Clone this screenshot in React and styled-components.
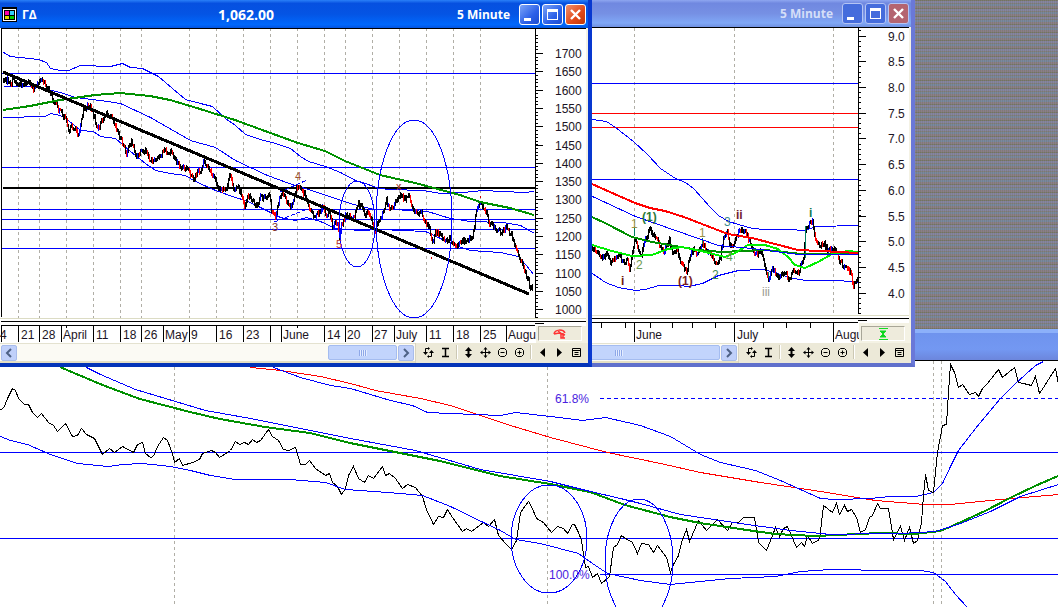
import React from 'react'
import styled, { createGlobalStyle } from "styled-components";

/* price paths as x,y pairs */
const MAIN_PRICE = "0,409 3,408 7,398 12,388 15,390 18,398 24,404 28,404 32,412 37,417 41,413 48,422 53,425 57,431 65,423 72,436 77,435 81,428 86,434 94,438 102,454 109,448 114,452 122,446 133,452 137,444 142,442 145,453 150,457 153,456 157,446 163,437 167,440 172,453 174,462 179,458 182,465 192,462 199,459 202,453 211,450 215,452 219,457 230,450 235,441 239,444 244,442 248,444 252,439 256,442 260,440 268,429 272,436 278,440 283,449 288,450 295,447 300,464 305,464 309,460 315,468 325,475 329,473 332,482 337,486 341,494 345,488 348,475 353,466 358,478 364,482 368,475 373,478 382,466 385,475 389,473 395,478 402,488 407,484 415,487 422,496 426,509 433,524 438,516 443,517 447,509 452,517 462,531 466,528 471,531 483,522 488,526 494,519 498,535 505,543 511,549 516,540 520,512 528,501 531,506 536,518 543,522 551,532 557,526 563,528 567,533 572,524 574,524 578,532 581,540 585,567 588,566 592,577 597,573 601,583 609,576 613,547 617,544 621,535 625,538 632,542 637,553 641,543 648,544 653,552 657,545 666,557 670,572 673,564 678,555 681,542 686,529 689,541 698,520 702,525 706,530 717,519 727,530 732,522 738,522 743,517 754,517 758,542 766,550 772,535 775,527 779,536 783,528 787,526 796,547 801,542 804,546 807,535 812,543 819,539 823,505 832,512 836,503 839,514 844,505 847,511 851,509 856,517 860,532 865,529 869,517 872,515 877,503 880,508 888,508 893,539 900,526 904,540 909,527 913,543 917,540 921,522 923,495 925,474 928,490 933,492 937,452 942,425 946,424 948,392 950,364 954,372 958,387 962,384 969,394 975,392 978,396 982,388 987,383 998,369 1002,377 1014,367 1018,382 1023,383 1031,385 1035,376 1039,393 1043,387 1055,368 1058,384";

const FRONT_PRICE = "3,80 8,81 10,86 13,78 17,85 22,84 28,83 33,88 36,87 40,79 45,85 49,90 52,99 57,108 62,115 66,118 68,130 72,127 75,130 78,134 80,124 83,110 87,106 91,108 94,118 97,130 101,122 105,114 111,114 117,131 119,136 122,144 126,153 131,141 134,150 136,158 140,153 146,151 148,158 152,163 156,160 162,153 164,149 167,155 171,152 175,160 180,166 186,168 190,175 193,181 195,174 200,172 203,160 206,166 211,174 215,179 218,189 226,191 229,174 233,188 238,189 242,197 244,206 248,195 252,200 257,207 260,197 265,199 269,193 271,210 275,219 278,203 282,192 287,204 291,208 293,199 296,188 300,187 302,190 306,198 310,210 314,216 319,214 322,206 326,216 329,210 332,228 334,221 337,223 339,239 341,226 346,213 350,219 354,217 358,204 361,207 365,216 368,211 372,222 375,230 378,221 382,214 386,200 389,208 393,205 397,198 400,193 404,200 408,196 412,207 416,214 421,212 425,222 429,227 432,243 435,232 440,235 444,242 449,239 455,246 460,242 468,240 472,236 474,225 476,210 480,202 484,209 489,222 494,228 500,232 506,228 511,235 515,246 519,260 524,270 528,280 530,291 533,285";

const BACK_PRICE = "592,248 597,252 602,258 606,254 610,262 615,257 618,253 623,263 627,260 629,271 631,260 633,247 635,237 638,248 641,255 643,245 647,235 649,227 652,233 656,238 660,248 663,252 669,240 672,253 677,248 679,260 682,265 686,273 689,258 693,250 697,255 702,243 706,250 711,255 715,265 720,257 723,237 727,232 730,248 733,243 736,235 740,230 745,232 750,243 755,255 760,252 763,260 768,280 772,268 777,277 782,275 786,275 789,280 793,270 798,272 803,258 805,230 808,225 812,223 815,240 819,247 823,243 828,250 835,250 840,262 845,268 850,272 853,287 855,281 858,277";

const FRONT_GRID = [18, 39, 66, 93, 120, 141, 189, 216, 243, 270, 297, 324, 345, 372, 399, 426, 453, 480];
const FRONT_DATES = [
  [1, 0, "4"], [18, 21, "21"], [39, 42, "28"], [61, 63, "April"], [93, 96, "11"], [120, 123, "18"],
  [141, 144, "26"], [163, 165, "May"], [189, 191, "9"], [216, 219, "16"], [243, 246, "23"], [270, 273, ""],
  [281, 283, "June"], [324, 327, "14"], [345, 347, "20"], [372, 374, "27"], [394, 396, "July"],
  [426, 429, "11"], [453, 456, "18"], [480, 483, "25"], [506, 508, "Augu"],
];
const BACK_DATES = [[634, 636, "June"], [734, 737, "July"], [833, 835, "Augu"]];
const BACK_TICKS = [601, 625, 650, 672, 692, 715, 763, 786, 810];

const FRONT_SCALE = Array.from({ length: 15 }, (_, i) => ({ y: 53 + i * 18.3, label: String(1700 - i * 50) }));
const BACK_SCALE = Array.from({ length: 11 }, (_, i) => ({ y: 35.6 + i * 25.7, label: (9 - i * 0.5).toFixed(1) }));

/* turns a price path into short vertical bars, one per pixel column, split by colour */
function makeBars(text, seed) {
  const pts = text.split(" ").map((p) => p.split(",").map(Number));
  const out = { black: "", red: "", blue: "" };
  let s = seed;
  const rand = () => {
    s = (s * 1103515245 + 12345) % 2147483648;
    return s / 2147483648;
  };
  let last = pts[0][1];
  for (let i = 0; i < pts.length - 1; i++) {
    const [x1, y1] = pts[i];
    const [x2, y2] = pts[i + 1];
    for (let x = x1; x < x2; x++) {
      const y = y1 + ((y2 - y1) * (x - x1)) / (x2 - x1) + (rand() - 0.5) * 5;
      const r = rand();
      const top = Math.round(Math.min(last, y) - 1 - rand() * 1.5);
      const bottom = Math.round(Math.max(last, y) + 1 + rand() * 1.5);
      const key = r < 0.6 ? "black" : y > last ? "red" : r < 0.85 ? "blue" : "black";
      out[key] += `M${x} ${top}V${bottom}`;
      last = y;
    }
  }
  return out;
}

const FRONT_BARS = makeBars(FRONT_PRICE, 7);
const BACK_BARS = makeBars(BACK_PRICE, 19);

function PriceBars({ bars }) {
  return (
    <g transform="translate(0.5 0)">
      <Line d={bars.red} color="#f00" />
      <Line d={bars.blue} color="#00f" />
      <Line d={bars.black} color="#000" />
    </g>
  )
}

/* odd widths sit on half pixels so that flat runs keep one even thickness */
function Curve({ points, color = "#00f", width = 1 }) {
  return <Poly points={points} $color={color} $width={width} transform={width % 2 ? "translate(0.5 0.5)" : undefined} />
}

function Line({ d, color, width = 1, dash }) {
  return <path d={d} fill="none" stroke={color} strokeWidth={width} strokeDasharray={dash} shapeRendering="crispEdges" />
}

function Grid({ xs, top, bottom }) {
  return <Line d={xs.map((x) => `M${x + 0.5} ${top}V${bottom}`).join("")} color="#b0aea6" dash="3 3" />
}

function Levels({ ys, from, to, color = "#00f" }) {
  return <Line d={ys.map((y) => `M${from} ${y + 0.5}H${to}`).join("")} color={color} />
}

function Scale({ x, marks, top, bottom, labelX }) {
  const step = marks[1].y - marks[0].y;
  const ticks = [];
  for (let y = marks[0].y - step; y < bottom; y += step / 5) {
    if (y > top) ticks.push(`M${x} ${Math.round(y) + 0.5}h3`);
  }
  return (
    <g>
      <Line d={`M${x + 0.5} ${top}V${bottom}${ticks.join("")}`} color="#000" />
      <Line d={marks.map((m) => `M${x} ${Math.round(m.y) + 0.5}h8`).join("")} color="#000" />
      {marks.map((m) => <Label key={m.label} x={labelX} y={Math.round(m.y) + 5}>{m.label}</Label>)}
    </g>
  )
}

function Dates({ items, top }) {
  return (
    <g>
      <Line d={items.map((d) => `M${d[0] + 0.5} ${top}V342`).join("")} color="#000" />
      {items.map((d) => <Label key={d[0]} x={d[1]} y={339}>{d[2]}</Label>)}
    </g>
  )
}

function FrontPlot() {
  return (
    <svg width="586" height="298" viewBox="0 28 586 298" role="img" aria-label="Index price chart">
      <rect x="0" y="28" width="586" height="298" fill="#fff" />
      <Grid xs={FRONT_GRID} top={28} bottom={318} />
      <Levels ys={[73, 167, 209, 219, 229, 248]} from={2} to={535} />
      <Line d="M3 188H535" color="#000" width={2} />
      <Curve points="3,52 10,56 38,59 46,62 50,68 60,70 68,70 80,65 110,66 122,63 130,67 142,68 158,76 172,88 185,99 200,103 212,106 225,118 235,125 245,134 260,139 275,143 290,148 300,156 308,161 325,166 340,172 355,180 365,183 378,188 390,189 423,190 440,193 463,192 482,190 503,191 523,192 534,191" />
      <Curve points="3,86 35,86 60,92 75,97 100,100 120,103 150,117 190,140 215,147 235,160 267,175 297,186 305,188 323,194 350,203 373,209 393,209 427,211 450,218 470,221 503,222 520,225 534,233" />
      <Curve points="3,117 45,116 50,113 60,115 68,120 80,130 93,131 100,136 115,138 130,151 145,163 155,170 170,173 185,175 195,181 215,190 235,197 245,200 258,206 268,211 280,217 295,220 306,217 320,221 335,228 360,230 380,229 425,231 440,238 455,245 470,250 500,252 518,256 526,265 533,274" />
      <Line d="M274 222L290 216L307 209M280 192L307 180" color="#00f" dash="4 2" />
      <PriceBars bars={FRONT_BARS} />
      <Curve points="3,110 30,106 60,100 95,95 120,93 150,96 170,100 200,109 235,120 265,131 298,143 325,151 345,161 380,175 415,183 430,187 460,195 480,202 510,208 534,215" color="#009000" width={2} />
      <Line d="M3 72L529 294" color="#000" width={3} />
      <Ring cx="357" cy="224" rx="18" ry="43" />
      <Ring cx="414" cy="219" rx="38" ry="99" />
      <Line d="M480 196v2M431 257v2" color="#c00" />
      <Label x="295" y="180" $color="#a0522d" $small>4</Label>
      <Label x="272" y="231" $color="#80301e" $small>3</Label>
      <Label x="336" y="248" $color="#b0342c" $small>5</Label>
      <Label x="396" y="190" $color="#b04030" $small>x</Label>
      <Scale x={535} marks={FRONT_SCALE} top={28} bottom={317} labelX={555} />
      <Line d="M1.5 28V317" color="#000" />
      <Line d="M1 28.5H586M1 321.5H586M1 325.5H535" color="#000" />
      <Line d="M0 318.5H586" color="#dcdcc4" />
      <Line d="M535 323.5H544" color="#000" />
    </svg>
  )
}

function BackPlot() {
  return (
    <svg width="586" height="296" viewBox="323 27 586 296" role="img" aria-label="Share price chart">
      <rect x="323" y="27" width="586" height="296" fill="#fff" />
      <Grid xs={[634, 734, 833]} top={28} bottom={315} />
      <Levels ys={[83, 179]} from={592} to={858} />
      <Levels ys={[113, 127]} from={592} to={858} color="#f00" />
      <Curve points="592,119 606,121 615,127 633,141 647,154 660,168 675,178 685,182 693,188 702,198 710,207 718,215 728,221 738,224 752,228 765,229 788,229 805,230 815,226 858,225" />
      <Curve points="592,273 605,282 618,287 635,290 645,289 658,285 678,285 688,286 702,283 718,275 738,270 762,269 775,272 788,277 805,280 838,280 858,282" />
      <PriceBars bars={BACK_BARS} />
      <Line d="M634.5 228v8M702.5 238v6M805.5 226v32M768.5 272v6" color="#008060" />
      <Curve points="592,217 605,223 632,237 652,242 675,246 698,250 722,252 742,251 765,250 802,254 858,253" color="#009000" width={2} />
      <Curve points="592,245 612,251 632,256 652,255 668,249 682,247 705,252 725,257 735,253 748,245 765,245 778,249 788,257 795,265 805,268 818,262 832,254 848,251 858,252" color="#00f000" width={2} />
      <Curve points="592,184 610,192 635,203 650,208 665,211 684,217 702,224 728,234 752,238 775,244 798,250 820,251 858,253" color="#f00" width={2} />
      <Curve points="592,196 605,202 635,216 675,230 718,245 752,248 798,254 832,254 858,254" />
      <Label x="621" y="285" $color="#702010" $bold>i</Label>
      <Label x="631" y="228" $color="#9a9040">1</Label>
      <Label x="642" y="221" $color="#2b7a3a" $bold>(1)</Label>
      <Label x="636" y="269" $color="#6b9a50">2</Label>
      <Label x="678" y="285" $color="#7a1c1c" $bold>(1)</Label>
      <Label x="699" y="237" $color="#9a9040">1</Label>
      <Label x="712" y="279" $color="#3f8a50">2</Label>
      <Label x="724" y="226" $color="#3a8a8a">3</Label>
      <Label x="726" y="261" $color="#5a9a50">4</Label>
      <Label x="736" y="219" $color="#702030" $bold>ii</Label>
      <Label x="809" y="217" $color="#107a50" $bold>i</Label>
      <Label x="762" y="296" $color="#9a9a90">iii</Label>
      <Scale x={858} marks={BACK_SCALE} top={28} bottom={314} labelX={888} />
      <Line d="M592 27.5H909M592 318.5H909M592 322.5H858" color="#000" />
      <Line d="M592 315.5H909" color="#dcdcc4" />
      <Line d="M858 320.5H867" color="#000" />
    </svg>
  )
}

function MainPlot() {
  return (
    <WideChart viewBox="0 361 1058 246" role="img" aria-label="Intraday price chart">
      <Grid xs={[174, 547, 933, 941]} top={361} bottom={607} />
      <Levels ys={[452, 538]} from={0} to={1058} />
      <Levels ys={[574]} from={600} to={1058} />
      <Line d="M600 398.5H1058" color="#00f" dash="4 3" />
      <Curve points="250,367 280,370 320,376 350,383 375,390 420,398 450,405 510,425 550,437 607,452 660,463 700,472 760,482 820,491 875,500 925,504 950,504 1000,499 1058,494" color="#f00" />
      <Curve points="273,367 300,377 330,385 350,388 390,400 412,405 427,412 450,413 500,415 515,412 550,416 582,420 605,417 640,425 670,436 700,454 720,462 755,470 780,480 820,498 835,499 870,498 890,496 915,496 933,492 942,483 950,466 958,450 975,428 1000,398 1015,383 1035,365 1043,361" />
      <Curve points={MAIN_PRICE} color="#000" />
      <Curve points="60,367 100,384 140,399 190,412 220,419 265,427 310,433 350,443 395,452 440,461 500,476 550,484 590,492 625,505 670,517 700,523 740,529 775,534 815,536 880,533 915,534 940,531 950,527 985,511 1010,498 1035,486 1058,476" color="#009000" width={2} />
      <Curve points="86,367 100,374 135,389 175,401 205,410 250,418 300,428 350,438 415,450 480,469 550,481 590,491 620,498 640,503 680,514 700,517 740,523 790,530 830,534 880,533 900,533 935,531 960,523 990,511 1020,496 1058,484" />
      <Curve points="0,436 10,440 27,444 50,454 77,463 108,466 122,464 142,463 170,466 190,470 210,475 235,479 290,479 325,482 345,489 360,490 400,493 422,495 450,506 483,522 500,530 515,539 540,543 578,553 592,563 607,573 640,580 670,584 700,581 730,578 775,576 800,571 830,569 890,570 920,570 933,572 945,581 955,594 967,607" />
      <Ring cx="549" cy="539" rx="38" ry="54" />
      <Ring cx="639" cy="561" rx="34" ry="62" />
      <Label x="555" y="403" $color="#4a1ee0">61.8%</Label>
      <Label x="549" y="579" $color="#4a1ee0">100.0%</Label>
    </WideChart>
  )
}

/* glyphs of the tool strip, drawn in a 13px box */
const TOOLS = [
  ["Refresh", <g key="i"><path d="M6 2.500H3.500V7M7 10.500h2.500V6" fill="none" stroke="#000" /><path d="M1 6h5L3.500 9zM7 7h5L9.500 4z" /><path d="M6 1l2 1.500L6 4zM7 9l-2 1.500L7 12z" /></g>],
  ["Text cursor", <path key="i" d="M3 2.500h7M6.500 2.500v8M3 10.500h7" fill="none" stroke="#000" strokeWidth="1.500" />],
  null,
  ["Stretch", <path key="i" d="M6.500 1L10 5H7.500v3H10l-3.500 4L3 8h2.500V5H3z" />],
  ["Move", <g key="i"><path d="M6.500 2v9M2 6.500h9" fill="none" stroke="#000" /><path d="M6.500 1l2 2.500h-4zM6.500 12l2-2.500h-4zM1 6.500l2.500-2v4zM12 6.500l-2.500-2v4z" /></g>],
  ["Zoom out", <path key="i" d="M4.500 2.500h4l2 2v4l-2 2h-4l-2-2v-4zM4.500 6.500h4" fill="none" stroke="#000" />],
  ["Zoom in", <path key="i" d="M4.500 2.500h4l2 2v4l-2 2h-4l-2-2v-4zM4.500 6.500h4M6.500 4.500v4" fill="none" stroke="#000" />],
  null,
  ["Previous", <path key="i" d="M9 2v9L4 6.500z" />],
  ["Next", <path key="i" d="M4 2v9l5-4.500z" />],
  ["Properties", <path key="i" d="M2.500 2.500h8v8h-8zM2.500 4.500h8M4.500 6.500h4M4.500 8.500h4" fill="none" stroke="#000" />],
];

function ScrollArrow({ label, d }) {
  return (
    <ArrowButton type="button" aria-label={label}>
      <svg width="8" height="10" viewBox="0 0 8 10"><path d={d} fill="none" stroke="#4d6185" strokeWidth="2" /></svg>
    </ArrowButton>
  )
}

function ToolStrip({ thumb }) {
  return (
    <Strip>
      <ScrollTrack>
        <ScrollArrow label="Scroll left" d="M6 1L2 5l4 4" />
        <Thumb $width={thumb}><Grip /></Thumb>
        <ScrollArrow label="Scroll right" d="M2 1l4 4-4 4" />
      </ScrollTrack>
      <Tools>
        {TOOLS.map((t, i) => t
          ? <Tool key={i} type="button" aria-label={t[0]}><svg width="13" height="13" viewBox="0 0 13 13">{t[1]}</svg></Tool>
          : <Divider key={i} />)}
      </Tools>
    </Strip>
  )
}

function WindowButtons({ faded }) {
  return (
    <Buttons>
      <CaptionButton type="button" aria-label="Minimize" $faded={faded}>
        <svg width="19" height="19" viewBox="0 0 19 19"><path d="M4 13h7v3H4z" fill="#fff" /></svg>
      </CaptionButton>
      <CaptionButton type="button" aria-label="Maximize" $faded={faded}>
        <svg width="19" height="19" viewBox="0 0 19 19"><path d="M4 4h11v11H4zM5 7v7h9V7z" fill="#fff" fillRule="evenodd" /></svg>
      </CaptionButton>
      <CaptionButton type="button" aria-label="Close" $close $faded={faded}>
        <svg width="19" height="19" viewBox="0 0 19 19"><path d="M5 5l9 9M14 5l-9 9" stroke="#fff" strokeWidth="2.400" /></svg>
      </CaptionButton>
    </Buttons>
  )
}

function AppIcon() {
  return (
    <svg width="15" height="15" viewBox="0 0 15 15" shapeRendering="crispEdges">
      <path d="M0 0h15v15H0z" fill="#000" />
      <path d="M1 2h13v12H1z" fill="#fff" />
      <path d="M2 3h11v10H2z" fill="#000" />
      <path d="M3 4h4v4H3z" fill="#f0a" /><path d="M8 4h4v4H8z" fill="#3cf" />
      <path d="M3 9h4v3H3z" fill="#dd0" /><path d="M8 9h4v3H8z" fill="#0c0" />
    </svg>
  )
}

function App() {
  return (
    <Desktop>
      <GlobalStyle />
      <Backdrop />
      <MainPlot />
      <Window $left={323} $faded>
        <TitleBar $faded>
          <Period>5 Minute</Period>
          <WindowButtons faded />
        </TitleBar>
        <Body>
          <BackPlot />
          <TimeRow>
            <svg width="536" height="20" viewBox="323 323 536 20">
              <Dates items={BACK_DATES} top={323} />
              <Line d={BACK_TICKS.map((x) => `M${x + 0.5} 323v5`).join("")} color="#000" />
            </svg>
            <Status>
              <Panel><svg width="10" height="12" viewBox="0 0 10 12"><path d="M1 .5h9M1 11.500h9M2 3h6L5 6l3 3H2l3-3z" fill="#1c2" stroke="#1d2" /></svg></Panel>
            </Status>
          </TimeRow>
          <ToolStrip thumb={202} />
        </Body>
      </Window>
      <Window $left={0}>
        <TitleBar>
          <AppIcon />
          <Symbol>ΓΔ</Symbol>
          <LastPrice>1,062.00</LastPrice>
          <Period>5 Minute</Period>
          <WindowButtons />
        </TitleBar>
        <Body>
          <FrontPlot />
          <TimeRow>
            <svg width="536" height="17" viewBox="0 326 536 17">
              <Dates items={FRONT_DATES} top={326} />
              <Line d="M66.500 326v2M297.500 326v2" color="#000" />
            </svg>
            <Status>
              <Panel><svg width="14" height="10" viewBox="0 0 14 10"><path d="M1 5c1-5 9-5 11-1M1 5l5-1 6 2M8 5v4h4M5 2l4 3M10 4v5" fill="none" stroke="#f33" strokeWidth="1.500" /></svg></Panel>
            </Status>
          </TimeRow>
          <ToolStrip thumb={69} />
        </Body>
      </Window>
    </Desktop>
  )
}

export default App

const GlobalStyle = createGlobalStyle`
  body {
    margin: 0;
    background: #fff;
    font-family: "Liberation Sans", Arial, sans-serif;
    font-size: 12px;
  }
  svg {
    display: block;
    flex: none;
  }
`
const Desktop = styled.main`
  position: relative;
  display: flex;
  flex-direction: column;
  width: 100%;
  overflow: hidden;
`
const Backdrop = styled.div`
  height: 361px;
  box-sizing: border-box;
  border-bottom: 1px solid #000;
  background:
    linear-gradient(#8cb0fa, #8cb0fa) 0 329px / 100% 4px no-repeat,
    linear-gradient(#6f93ee, #7398f2 60%, #6c86dc) 0 333px / 100% 27px no-repeat,
    repeating-linear-gradient(90deg, rgba(110, 120, 100, 0.3) 0 1px, rgba(140, 130, 160, 0.3) 1px 2px),
    repeating-linear-gradient(#74735e 0 1px, #8484a4 1px 3px, #7f7c78 3px 4px, #7488a0 4px 6px, #8a7c80 6px 8px);
`
const WideChart = styled.svg`
  width: 100%;
  height: auto;
  background: #fff;
`
const Poly = styled.polyline`
  fill: none;
  stroke: ${props => props.$color};
  stroke-width: ${props => props.$width}px;
  shape-rendering: crispEdges;
`
const Ring = styled.ellipse`
  fill: none;
  stroke: #00f;
  stroke-width: 1px;
  shape-rendering: crispEdges;
`
const Label = styled.text`
  font-family: "Liberation Sans", Arial, sans-serif;
  font-size: ${props => props.$small ? "11px" : "12px"};
  font-weight: ${props => props.$bold ? 700 : 400};
  fill: ${props => props.$color || "#1c1424"};
`
const Window = styled.section`
  position: absolute;
  top: 0;
  left: ${props => props.$left}px;
  width: 592px;
  height: 367px;
  box-sizing: border-box;
  display: flex;
  flex-direction: column;
  border-right: 4px solid ${props => props.$faded ? "#6a78d8" : "#0838d0"};
  border-bottom: 4px solid ${props => props.$faded ? "#6070cc" : "#0434b8"};
  background: ${props => props.$faded ? "#7090ee" : "#0a5cf4"};
`
const TitleBar = styled.header`
  display: flex;
  align-items: center;
  height: ${props => props.$faded ? 27 : 28}px;
  flex: none;
  box-sizing: border-box;
  padding: 0 2px;
  color: ${props => props.$faded ? "#d4def8" : "#fff"};
  font-family: "Open Sans", sans-serif;
  font-weight: 700;
  background: ${props => props.$faded
    ? "linear-gradient(#8ea6f0, #7088e0 12%, #7690e4 50%, #80a8f6 85%, #7090e0)"
    : "linear-gradient(#2a80f8, #0650e0 12%, #0454e4 50%, #0068fc 88%, #0454e0)"};
`
const Symbol = styled.span`
  width: 196px;
  padding-left: 5px;
  font-size: 12px;
`
const LastPrice = styled.span`
  font-size: 14px;
`
const Period = styled.span`
  margin-left: auto;
  font-size: 12px;
`
const Buttons = styled.div`
  display: flex;
  gap: 2px;
  padding-left: 9px;
`
const CaptionButton = styled.button`
  width: 21px;
  height: 21px;
  padding: 0;
  border: 1px solid ${props => props.$faded ? "#b4c4f4" : "#fff"};
  border-radius: 3px;
  background: ${props => props.$close
    ? props.$faded ? "#b46470" : "linear-gradient(135deg, #f0906c, #e04818 60%, #c03808)"
    : props.$faded ? "#456cdc" : "linear-gradient(135deg, #7ca4f8, #2c60e8 60%, #1c4cd0)"};
`
const Body = styled.div`
  display: flex;
  flex-direction: column;
  flex: 1;
  background: #f4f2e4;
`
const TimeRow = styled.div`
  display: flex;
  svg {
    background: #fff;
  }
`
const Status = styled.div`
  display: flex;
  flex: 1;
  align-items: flex-end;
  padding: 0 6px 2px 2px;
`
const Panel = styled.div`
  display: flex;
  align-items: center;
  justify-content: center;
  flex: 1;
  height: 13px;
  border: 1px solid;
  border-color: #a8a698 #fff #fff #a8a698;
  background: #eeebdc;
  svg {
    background: none;
  }
`
const Strip = styled.div`
  display: flex;
  flex: 1;
`
const ScrollTrack = styled.div`
  display: flex;
  align-items: center;
  flex: 1;
  gap: 1px;
  padding: 0 1px;
  border-top: 1px solid #e4e2d0;
  border-bottom: 2px solid #e4dfc4;
  background: #fbfaf4;
`
const ArrowButton = styled.button`
  display: flex;
  align-items: center;
  justify-content: center;
  width: 16px;
  height: 16px;
  padding: 0;
  border: 1px solid #a8bcec;
  border-radius: 2px;
  background: #c0d0fa;
`
const Thumb = styled.div`
  display: flex;
  align-items: center;
  justify-content: center;
  width: ${props => props.$width}px;
  height: 15px;
  box-sizing: border-box;
  margin-left: auto;
  border: 1px solid #a4bcf0;
  border-radius: 2px;
  background: #c2d4fc;
`
const Grip = styled.span`
  width: 8px;
  height: 6px;
  background: repeating-linear-gradient(90deg, #8ea8e8 0 1px, #e4ecff 1px 2px);
`
const Tools = styled.div`
  display: flex;
  align-items: center;
  padding: 0 3px 2px 4px;
  border-left: 1px solid #d8d4c0;
  background: #ece9d8;
`
const Tool = styled.button`
  display: flex;
  align-items: center;
  justify-content: center;
  width: 17px;
  height: 16px;
  padding: 0;
  border: 0;
  background: none;
`
const Divider = styled.span`
  width: 6px;
  height: 14px;
  background: linear-gradient(90deg, transparent 2px, #ccc8b4 2px 3px, #fff 3px 4px, transparent 4px);
`
